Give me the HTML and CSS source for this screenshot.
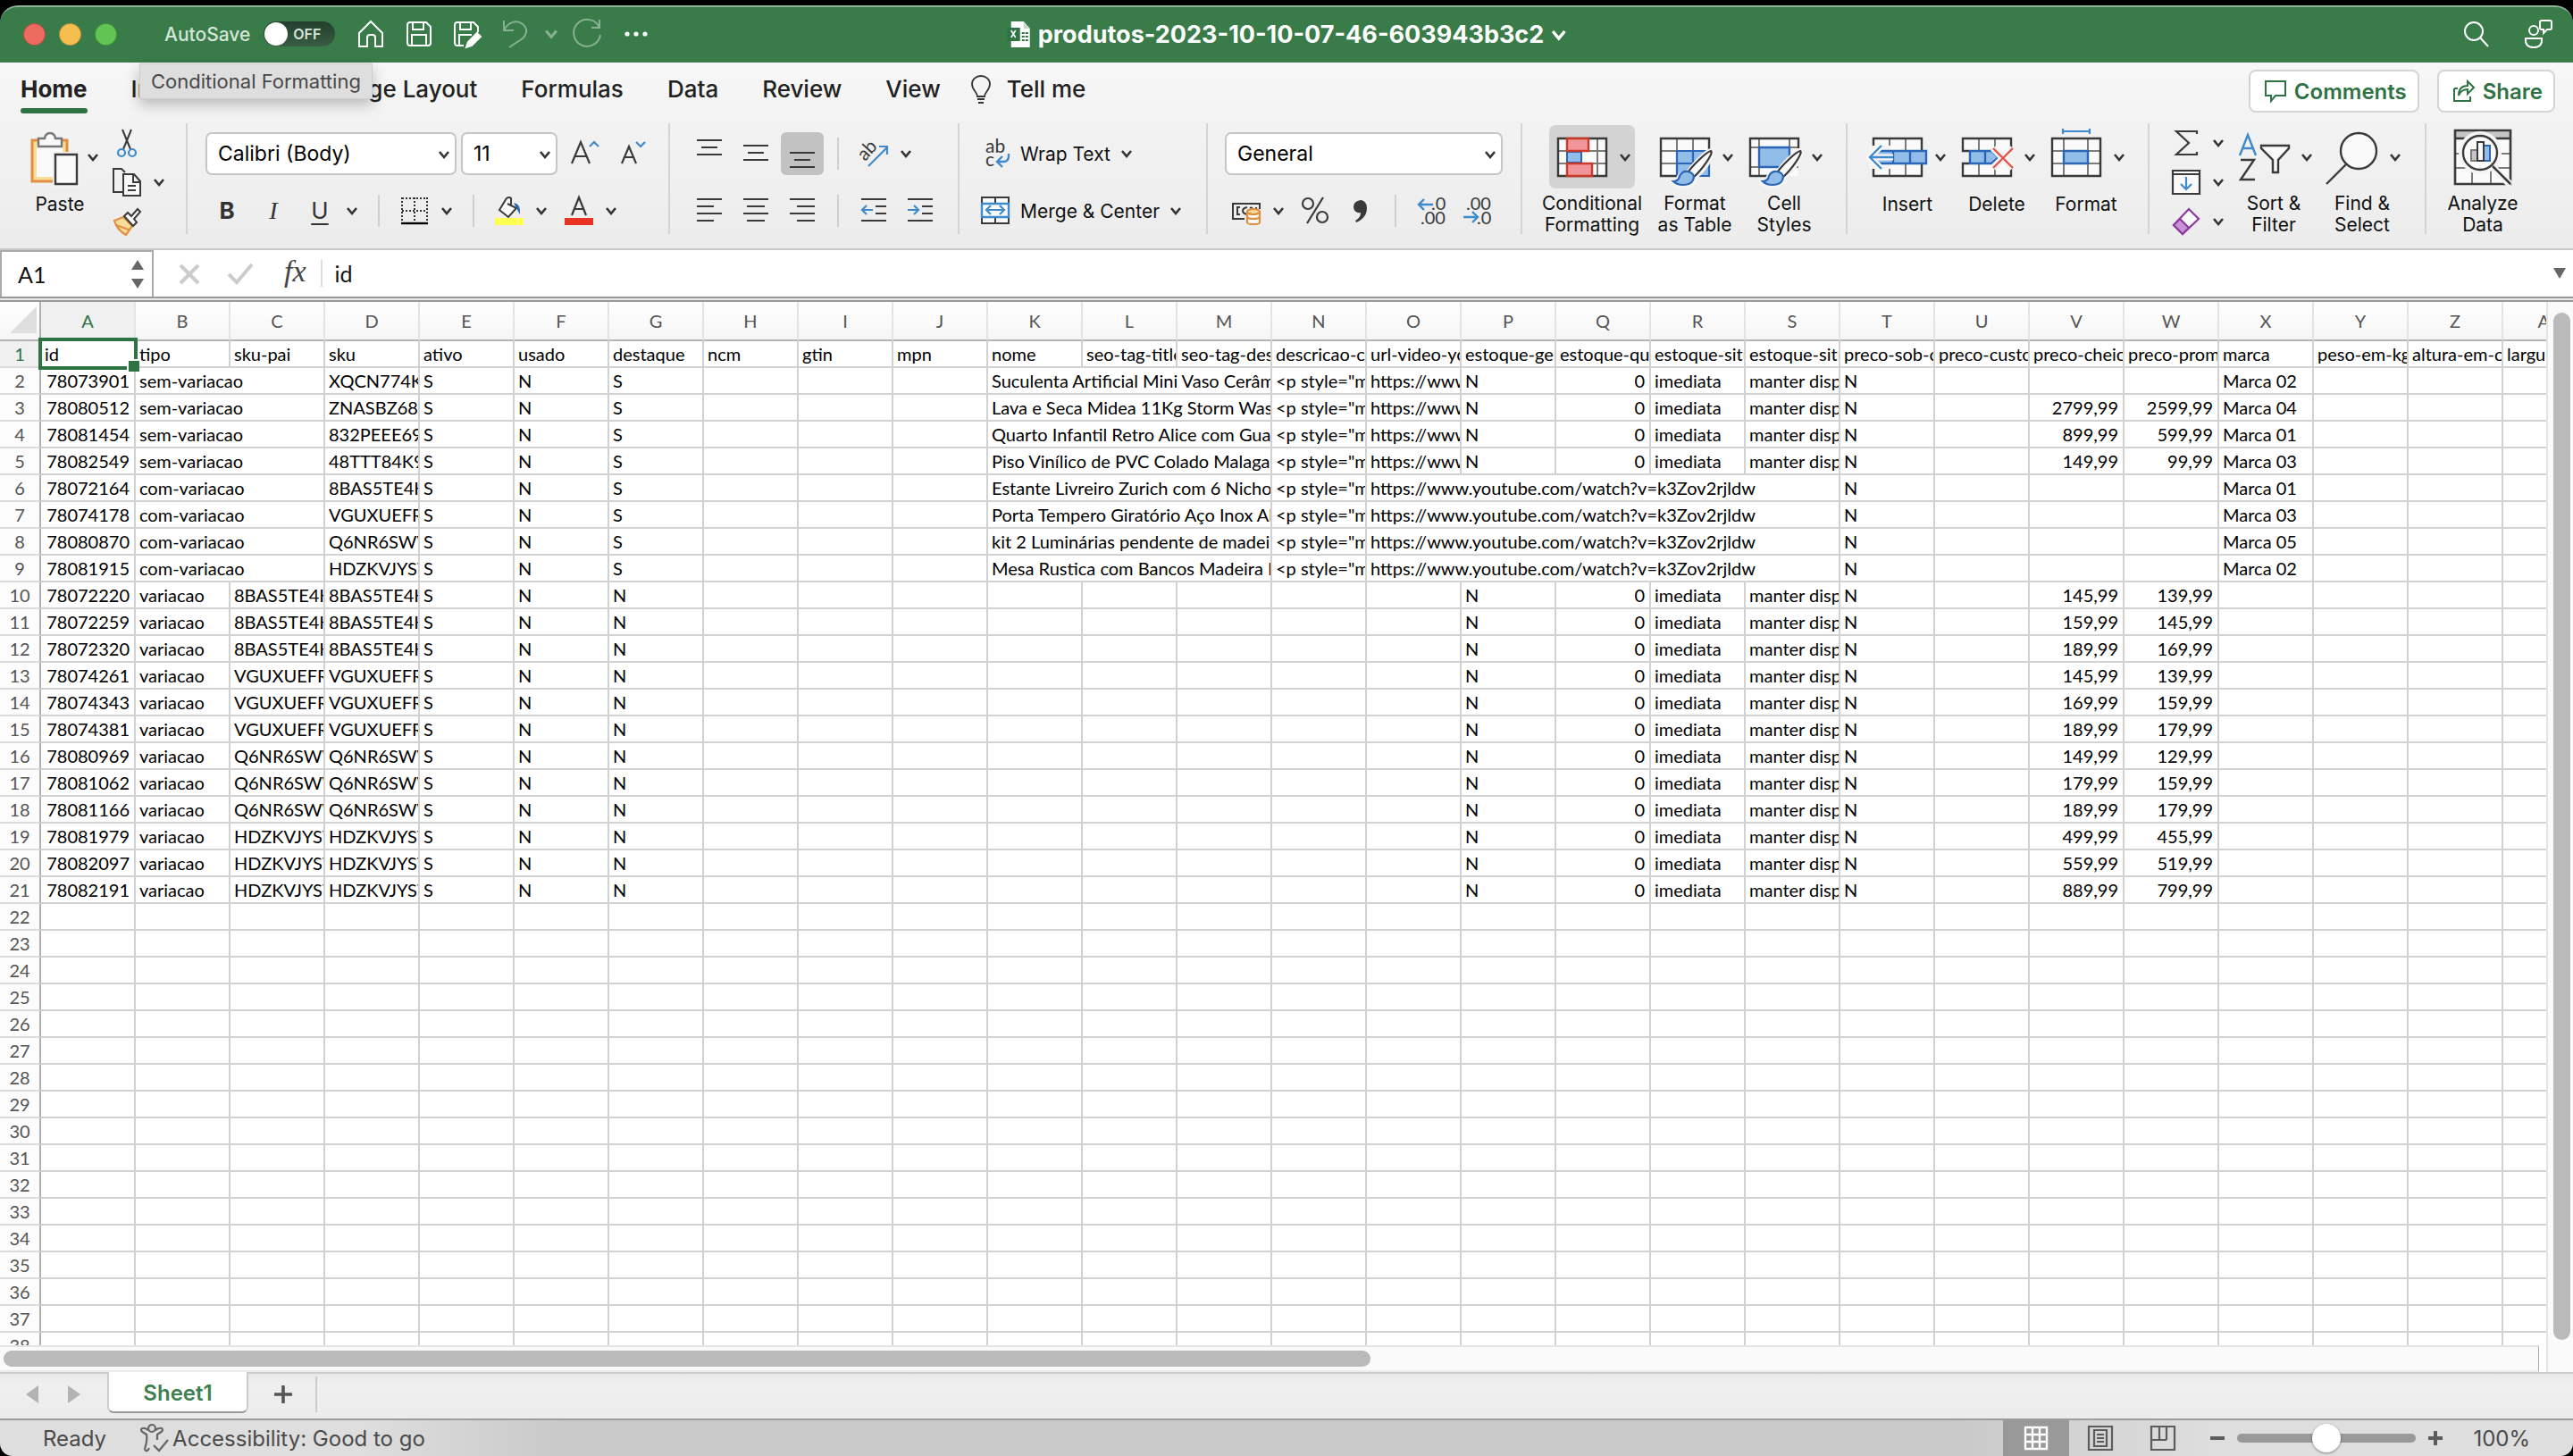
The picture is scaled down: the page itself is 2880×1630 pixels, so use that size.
FILE: index.html
```html
<!DOCTYPE html>
<html lang="en">
<head>
    <meta charset="UTF-8">
    <meta name="viewport" content="width=device-width, initial-scale=1.0">
    <title>produtos-2023-10-10-07-46-603943b3c2</title>
    <link rel="stylesheet" href="styles.css">
</head>
<body>

<svg class="defs" aria-hidden="true">
    <symbol id="chev" viewBox="0 0 12 10"><path d="M1 2l5 6 5-6" fill="none" stroke="currentColor" stroke-width="2.6"/></symbol>
</svg>

<div class="window">

<header class="titlebar">
    <div class="lights"><span class="red"></span><span class="yellow"></span><span class="green"></span></div>
    <label class="autosave">AutoSave <input type="checkbox" class="switch"><span class="off">OFF</span></label>
    <div class="quick">
        <button aria-label="Home"><svg width="32" height="32" viewBox="0 0 32 32"><path d="M3 30V15L16 2l13 13v15h-8V20q0-3-3-3h-3q-3 0-3 3v10z"/></svg></button>
        <button aria-label="Save"><svg width="32" height="32" viewBox="0 0 32 32"><path d="M3 6q0-3 3-3h18l5 5v18q0 3-3 3H6q-3 0-3-3zM9 3v8h12V3M8 29V17h16v12"/></svg></button>
        <button aria-label="Save as"><svg width="32" height="32" viewBox="0 0 32 32"><path d="M12 29H5q-3 0-3-3V6q0-3 3-3h18l5 5v6M8 3v8h12V3M7 29V17h14"/><path d="M27 15l4 4-10 10-6 2 2-6z" fill="#fff"/></svg></button>
        <button aria-label="Undo" class="dim"><svg width="32" height="32" viewBox="0 0 32 32"><path d="M3 1v11h11M3 12C8 2 18 0 24 5s5 11 0 16L9 31"/></svg></button>
        <button aria-label="Undo options" class="dim small"><svg width="14" height="12"><use href="#chev"/></svg></button>
        <button aria-label="Redo" class="dim"><svg width="32" height="32" viewBox="0 0 32 32"><path d="M30 0v9h-9M30 9a15 15 0 1 0 1 8"/></svg></button>
        <button aria-label="More"><svg width="32" height="32" viewBox="0 0 32 32"><g fill="#fff" stroke="none"><circle cx="7" cy="16" r="2.6"/><circle cx="17" cy="16" r="2.6"/><circle cx="27" cy="16" r="2.6"/></g></svg></button>
    </div>
    <div class="doc">
        <svg width="26" height="32" viewBox="0 0 26 32"><path d="M4 1h14l7 8v21H4z" fill="#fff"/><path d="M18 1v8h7z" fill="#ccd6cf"/><path d="M0 8h14v15H0z" fill="#2f7244"/><path d="M4 11l5 8M9 11l-5 8" stroke="#fff" stroke-width="1.6"/><path d="M16 13h3v2h-3zM20 13h3v2h-3zM16 17h3v2h-3zM20 17h3v2h-3zM16 21h3v2h-3zM20 21h3v2h-3z" fill="#2f7244"/></svg>
        <h1>produtos-2023-10-10-07-46-603943b3c2</h1>
        <svg width="16" height="14"><use href="#chev"/></svg>
    </div>
    <div class="tools">
        <button aria-label="Search"><svg width="32" height="32" viewBox="0 0 32 32"><circle cx="13" cy="13" r="10"/><path d="M20 20l9 10"/></svg></button>
        <button aria-label="Presence"><svg width="34" height="34" viewBox="0 0 34 34"><circle cx="12" cy="13" r="5"/><path d="M3 22h18q1 10-9 10T3 22zM21 2h9q2 0 2 2v6q0 2-2 2h-3l-4 4v-4h-2q-2 0-2-2V4q0-2 2-2z"/></svg></button>
    </div>
</header>

<nav class="tabs">
    <a href="#" class="active">Home</a>
    <a href="#">Insert</a>
    <a href="#">Draw</a>
    <a href="#">Page Layout</a>
    <a href="#">Formulas</a>
    <a href="#">Data</a>
    <a href="#">Review</a>
    <a href="#">View</a>
    <a href="#" class="tell"><svg width="24" height="32" viewBox="0 0 24 32"><path d="M8 24c0-5-6-7-6-14a10 9 0 0 1 20 0c0 7-6 9-6 14zM8 27h8M9 31h6" fill="none" stroke="#333" stroke-width="1.8"/></svg>Tell me</a>
    <div class="share">
        <button><svg width="26" height="28" viewBox="0 0 26 28"><path d="M2 3h22v16H13l-5 6v-6H2z" fill="none" stroke="#2f7244" stroke-width="2"/></svg>Comments</button>
        <button><svg width="26" height="28" viewBox="0 0 26 28"><path d="M2 11v14h18v-5M2 11h4M7 19c0-8 4-11 10-11V3l7 7-7 7v-5c-5 0-8 2-10 7z" fill="none" stroke="#2f7244" stroke-width="2"/></svg>Share</button>
    </div>
    <div class="tooltip" role="tooltip">Conditional Formatting</div>
</nav>

<div class="ribbon">
    <section class="group g-clip">
        <button class="big"><span class="pic"><svg width="64" height="64" viewBox="0 0 64 64"><path d="M12 13h39v46H12z" fill="#f8dc9a" stroke="#e08f41" stroke-width="3"/><path d="M17 18h29v36H17z" fill="#fafafa"/><path d="M19 20v-9h7q1-6 6-6t6 6h7v9z" fill="#fafafa" stroke="#777" stroke-width="2.4"/><path d="M35 26h31v40H35z" fill="#f2f2f2"/><path d="M38 29h24v33H38z" fill="#fafafa" stroke="#3a3a3a" stroke-width="2.4"/></svg><svg class="chev" width="12" height="10"><use href="#chev"/></svg></span><span>Paste</span></button>
        <div class="stack">
            <button class="split" aria-label="Cut"><svg width="32" height="32" viewBox="0 0 32 32"><path d="M11 1l9 22M21 1l-9 22" fill="none" stroke="#3a3a3a" stroke-width="2"/><g fill="none" stroke="#3f8acb" stroke-width="2.2"><circle cx="10" cy="27" r="4"/><circle cx="22" cy="27" r="4"/></g></svg></button>
            <button class="split" aria-label="Copy"><svg width="32" height="32" viewBox="0 0 32 32"><path d="M12 27H1V1h9l4 4" fill="none" stroke="#3a3a3a" stroke-width="2"/><path d="M12 7h12l7 8v16H12zM23 7v9h8M17 20h9M17 25h9" fill="#fafafa" stroke="#3a3a3a" stroke-width="2"/></svg><svg class="chev" width="12" height="10"><use href="#chev"/></svg></button>
            <button class="split" aria-label="Format painter"><svg width="32" height="32" viewBox="0 0 32 32"><path d="M2 15l10-4 10 10-7 10C8 27 4 22 2 15z" fill="#f8dc9a" stroke="#e08f41" stroke-width="2.2"/><path d="M4 20l14 5" stroke="#e08f41" stroke-width="2"/><path d="M13 10l4-4 4 4 7-8 3 3-7 8 3 4-4 4z" fill="#fafafa" stroke="#3a3a3a" stroke-width="2"/></svg></button>
        </div>
    </section>

    <section class="group g-font">
        <div class="row combos">
            <span class="combo wide"><select aria-label="Font"><option>Calibri (Body)</option></select><svg class="chev" width="12" height="10"><use href="#chev"/></svg></span>
            <span class="combo size"><select aria-label="Font size"><option>11</option></select><svg class="chev" width="12" height="10"><use href="#chev"/></svg></span>
            <button aria-label="Increase font size"><svg width="34" height="32" viewBox="0 0 34 32"><path d="M3 27L13 3l10 24M7 19h12" fill="none" stroke="#3a3a3a" stroke-width="2.2"/><path d="M23 8l5-5 5 5" fill="none" stroke="#3f8acb" stroke-width="2.2"/></svg></button>
            <button aria-label="Decrease font size"><svg width="34" height="32" viewBox="0 0 34 32"><path d="M8 27l8-19 8 19M11 20h10" fill="none" stroke="#3a3a3a" stroke-width="2.2"/><path d="M24 3l5 5 5-5" fill="none" stroke="#3f8acb" stroke-width="2.2"/></svg></button>
        </div>
        <div class="row">
            <button class="b">B</button>
            <button class="i">I</button>
            <button class="split"><span class="u">U</span><svg class="chev" width="12" height="10"><use href="#chev"/></svg></button>
            <i class="sep"></i>
            <button class="split" aria-label="Borders"><svg width="32" height="32" viewBox="0 0 32 32"><path d="M2 2h28M2 16h28M2 1v27M16 1v27M30 1v27" fill="none" stroke="#333" stroke-width="2" stroke-dasharray="2 2"/><path d="M1 30h30" stroke="#000" stroke-width="2.4"/></svg><svg class="chev" width="12" height="10"><use href="#chev"/></svg></button>
            <i class="sep"></i>
            <button class="split" aria-label="Fill color"><svg width="32" height="32" viewBox="0 0 32 32"><path d="M0 24h32v8H0z" fill="#ffff54"/><path d="M14 8l10 5-9 10L5 15l8-13q3-2 5 0v9" fill="#fafafa" stroke="#3a3a3a" stroke-width="2"/><path d="M21 7q8 1 7 13l-4-7z" fill="#2b65b5"/></svg><svg class="chev" width="12" height="10"><use href="#chev"/></svg></button>
            <button class="split" aria-label="Font color"><svg width="32" height="32" viewBox="0 0 32 32"><path d="M0 24h32v8H0z" fill="#ea3323"/><path d="M8 21l8-20 8 20M11 14h10" fill="none" stroke="#3a3a3a" stroke-width="2.2"/></svg><svg class="chev" width="12" height="10"><use href="#chev"/></svg></button>
        </div>
    </section>

    <section class="group g-align">
        <div class="row">
            <button aria-label="Top align"><svg class="ln" width="32" height="32" viewBox="0 0 32 32"><path d="M2 1h28M7 9h18M2 17h28"/></svg></button>
            <button aria-label="Middle align"><svg class="ln" width="32" height="32" viewBox="0 0 32 32"><path d="M2 7h28M7 15h18M2 23h28"/></svg></button>
            <button aria-label="Bottom align" class="on"><svg class="ln" width="32" height="32" viewBox="0 0 32 32"><path d="M2 15h28M7 23h18M2 31h28"/></svg></button>
            <i class="sep"></i>
            <button class="split" aria-label="Orientation"><svg width="32" height="32" viewBox="0 0 32 32"><text class="ico-text" x="3" y="22" font-size="21" fill="#3a3a3a" transform="rotate(-48 8 20)">ab</text><path d="M10 30L31 9M22 8h9v9" fill="none" stroke="#3f8acb" stroke-width="2.2"/></svg><svg class="chev" width="12" height="10"><use href="#chev"/></svg></button>
        </div>
        <div class="row">
            <button aria-label="Align left"><svg class="ln" width="32" height="32" viewBox="0 0 32 32"><path d="M2 3h28M2 11h19M2 19h28M2 27h19"/></svg></button>
            <button aria-label="Center"><svg class="ln" width="32" height="32" viewBox="0 0 32 32"><path d="M2 3h28M6 11h20M2 19h28M6 27h20"/></svg></button>
            <button aria-label="Align right"><svg class="ln" width="32" height="32" viewBox="0 0 32 32"><path d="M2 3h28M10 11h20M2 19h28M10 27h20"/></svg></button>
            <i class="sep"></i>
            <button aria-label="Decrease indent"><svg class="ln" width="32" height="32" viewBox="0 0 32 32"><path d="M2 3h28M18 11h12M18 19h12M2 27h28"/><path class="blue" d="M3 15h12M8 10l-5 5 5 5"/></svg></button>
            <button aria-label="Increase indent"><svg class="ln" width="32" height="32" viewBox="0 0 32 32"><path d="M2 3h28M18 11h12M18 19h12M2 27h28"/><path class="blue" d="M2 15h12M9 10l5 5-5 5"/></svg></button>
        </div>
    </section>

    <section class="group g-wrap">
        <div class="row">
            <button class="labelled"><svg width="32" height="32" viewBox="0 0 32 32"><text class="ico-text" x="5" y="15" font-size="21" fill="#3a3a3a">ab</text><text class="ico-text" x="5" y="30" font-size="21" fill="#3a3a3a">c</text><path d="M31 16v3q0 6-6 6h-7M24 19l-6 6 6 6" fill="none" stroke="#3f8acb" stroke-width="2.4"/></svg>Wrap Text<svg class="chev" width="12" height="10"><use href="#chev"/></svg></button>
        </div>
        <div class="row">
            <button class="labelled"><svg width="32" height="32" viewBox="0 0 32 32"><path d="M1 1h30v29H1zM16 1v29" fill="#fafafa" stroke="#3a3a3a" stroke-width="2"/><path d="M1 8h30v15H1z" fill="#fafafa" stroke="#3f8acb" stroke-width="2.4"/><path d="M6 15h20M11 10l-5 5 5 5M21 10l5 5-5 5" fill="none" stroke="#3f8acb" stroke-width="2.2"/></svg>Merge &amp; Center<svg class="chev" width="12" height="10"><use href="#chev"/></svg></button>
        </div>
    </section>

    <section class="group g-num">
        <div class="row">
            <span class="combo fmt"><select aria-label="Number format"><option>General</option></select><svg class="chev" width="12" height="10"><use href="#chev"/></svg></span>
        </div>
        <div class="row">
            <button class="split" aria-label="Currency"><svg width="32" height="32" viewBox="0 0 32 32"><path d="M14 25H1V8h30v6" fill="none" stroke="#3a3a3a" stroke-width="2"/><path d="M9 12H6v8h3M17 20q-5-1-5-4t5-4M20 13q2-1 3 1M27 12v2" fill="none" stroke="#3a3a3a" stroke-width="2"/><path d="M17 17v12q0 2 7 2t7-2V17" fill="#fafafa" stroke="#e08f41" stroke-width="2.2"/><ellipse cx="24" cy="17" rx="7" ry="3" fill="#f8dc9a" stroke="#e08f41" stroke-width="2.2"/><path d="M17 23q1 2 7 2t7-2" fill="none" stroke="#e08f41" stroke-width="2.2"/></svg><svg class="chev" width="12" height="10"><use href="#chev"/></svg></button>
            <button aria-label="Percent"><svg width="32" height="32" viewBox="0 0 32 32"><g fill="none" stroke="#3a3a3a" stroke-width="2.2"><circle cx="8" cy="8" r="6"/><circle cx="24" cy="23" r="6"/><path d="M25 1L7 30"/></g></svg></button>
            <button aria-label="Comma"><svg width="32" height="32" viewBox="0 0 32 32"><path d="M10 27q6-3 6-9-7 1-8-6 0-7 8-8 7 1 7 9 0 11-12 16z" fill="#3a3a3a"/></svg></button>
            <i class="sep"></i>
            <button aria-label="Increase decimal"><svg width="32" height="32" viewBox="0 0 32 32"><text class="ico-text" x="17" y="15" font-size="20" fill="#3a3a3a">.0</text><text class="ico-text" x="5" y="31" font-size="20" fill="#3a3a3a">.00</text><path d="M19 9H3M9 3L3 9l6 6" fill="none" stroke="#3f8acb" stroke-width="2.4"/></svg></button>
            <button aria-label="Decrease decimal"><svg width="32" height="32" viewBox="0 0 32 32"><text class="ico-text" x="5" y="15" font-size="20" fill="#3a3a3a">.00</text><text class="ico-text" x="17" y="31" font-size="20" fill="#3a3a3a">.0</text><path d="M2 23h16M12 17l6 6-6 6" fill="none" stroke="#3f8acb" stroke-width="2.4"/></svg></button>
        </div>
    </section>

    <section class="group g-styles">
        <button class="big wide-label pressed"><span class="pic"><svg width="64" height="64" viewBox="0 0 64 64"><path d="M5 11h54v42H5z" fill="#fafafa"/><path d="M5 25h54M5 39h54M15 11v42M49 11v42" stroke="#7c7b76" stroke-width="2"/><path d="M5 11h54v42H5z" fill="none" stroke="#3a3a3a" stroke-width="2.4"/><path d="M15 26h16v12H15z" fill="#92bde8" stroke="#2b65b5" stroke-width="2"/><path d="M32 26h16v12H32z" fill="#fafafa"/><path d="M15 11h24v14H15zM15 39h28v14H15z" fill="#f09599" stroke="#c93a2c" stroke-width="2.4"/></svg><svg class="chev" width="12" height="10"><use href="#chev"/></svg></span><span>Conditional<br>Formatting</span></button>
        <button class="big"><span class="pic"><svg width="64" height="64" viewBox="0 0 64 64"><path d="M5 11h54v42H5z" fill="#fafafa"/><path d="M23 25h36v28H23z" fill="#92bde8"/><path d="M5 25h18M5 39h18M23 11v14M41 11v14" stroke="#7c7b76" stroke-width="2"/><path d="M59 24V11H5v42h18" fill="none" stroke="#3a3a3a" stroke-width="2.4"/><path d="M23 53V25h36v28H23M23 39h36M41 25v14" fill="none" stroke="#2b65b5" stroke-width="2.2"/><path d="M61 25c-4 0-22 18-26 26q-7-2-10 5-3 6-8 2 6 9 16 6 10-1 10-10c10-8 23-27 18-29z" fill="#f4f4f4" stroke="#f4f4f4" stroke-width="6"/><path d="M61 25c-5 1-20 16-25 23l6 6c8-7 23-27 19-29z" fill="#fafafa" stroke="#3a3a3a" stroke-width="2.2"/><path d="M19 59q6 0 7-6 3-6 9-5 6 1 7 6-1 9-12 9-7 0-11-4z" fill="#92bde8" stroke="#2b65b5" stroke-width="2.2"/></svg><svg class="chev" width="12" height="10"><use href="#chev"/></svg></span><span>Format<br>as Table</span></button>
        <button class="big"><span class="pic"><svg width="64" height="64" viewBox="0 0 64 64"><path d="M5 11h54v42H5z" fill="#fafafa"/><path d="M5 21h54M5 43h54M15 11v42M49 11v12" stroke="#7c7b76" stroke-width="2"/><path d="M59 22V11H5v42h20" fill="none" stroke="#3a3a3a" stroke-width="2.4"/><path d="M15 21h34v22H15z" fill="#92bde8" stroke="#2b65b5" stroke-width="2.4"/><path d="M61 25c-4 0-22 18-26 26q-7-2-10 5-3 6-8 2 6 9 16 6 10-1 10-10c10-8 23-27 18-29z" fill="#f4f4f4" stroke="#f4f4f4" stroke-width="6"/><path d="M61 25c-5 1-20 16-25 23l6 6c8-7 23-27 19-29z" fill="#fafafa" stroke="#3a3a3a" stroke-width="2.2"/><path d="M19 59q6 0 7-6 3-6 9-5 6 1 7 6-1 9-12 9-7 0-11-4z" fill="#92bde8" stroke="#2b65b5" stroke-width="2.2"/></svg><svg class="chev" width="12" height="10"><use href="#chev"/></svg></span><span>Cell<br>Styles</span></button>
    </section>

    <section class="group g-cells">
        <button class="big"><span class="pic"><svg width="64" height="64" viewBox="0 0 64 64"><path d="M5 11h54v42H5z" fill="#fafafa"/><path d="M23 11v42M41 11v42" stroke="#7c7b76" stroke-width="2"/><path d="M5 11h54v42H5z" fill="none" stroke="#3a3a3a" stroke-width="2.4"/><path d="M0 19h24v26H0z" fill="#f4f4f4"/><path d="M8 25h56v14H8zM27 25v14M46 25v14" fill="#92bde8" stroke="#2b65b5" stroke-width="2.4"/><path d="M1 32h26M14 19L1 32l13 13" fill="none" stroke="#fafafa" stroke-width="7"/><path d="M1 32h26M14 19L1 32l13 13" fill="none" stroke="#3f8acb" stroke-width="2.4"/></svg><svg class="chev" width="12" height="10"><use href="#chev"/></svg></span><span>Insert</span></button>
        <button class="big"><span class="pic"><svg width="64" height="64" viewBox="0 0 64 64"><path d="M5 11h54v14H5zM5 39h54v14H5z" fill="#fafafa"/><path d="M23 11v42M41 11v42" stroke="#7c7b76" stroke-width="2"/><path d="M12 25H5V11h54v10M12 39H5v14h54V43" fill="none" stroke="#3a3a3a" stroke-width="2.4"/><path d="M13 25h24l8 7-8 7H13zM30 25v14" fill="#92bde8" stroke="#2b65b5" stroke-width="2.4"/><path d="M39 22l22 22M61 22L39 44" stroke="#f4f4f4" stroke-width="8"/><path d="M39 22l22 22M61 22L39 44" stroke="#e2544b" stroke-width="2.4"/></svg><svg class="chev" width="12" height="10"><use href="#chev"/></svg></span><span>Delete</span></button>
        <button class="big"><span class="pic"><svg width="64" height="64" viewBox="0 0 64 64"><path d="M5 11h54v42H5z" fill="#fafafa"/><path d="M5 25h54M5 39h54M18 11v42M45 11v42" stroke="#7c7b76" stroke-width="2"/><path d="M5 11h54v42H5z" fill="none" stroke="#3a3a3a" stroke-width="2.4"/><path d="M18 25h27v14H18z" fill="#92bde8" stroke="#2b65b5" stroke-width="2.4"/><path d="M17 3h30M17 0v6M47 0v6" stroke="#3f8acb" stroke-width="2.2"/></svg><svg class="chev" width="12" height="10"><use href="#chev"/></svg></span><span>Format</span></button>
    </section>

    <section class="group g-edit">
        <div class="stack">
            <button class="split" aria-label="AutoSum"><svg width="32" height="32" viewBox="0 0 32 32"><path d="M28 6V3H5l14 13L5 29h23v-3" fill="none" stroke="#3a3a3a" stroke-width="2.2"/></svg><svg class="chev" width="12" height="10"><use href="#chev"/></svg></button>
            <button class="split" aria-label="Fill"><svg width="32" height="32" viewBox="0 0 32 32"><path d="M1 3h30v26H1z" fill="#fafafa" stroke="#3a3a3a" stroke-width="2.2"/><path d="M1 7h30" stroke="#3a3a3a" stroke-width="2"/><path d="M16 10v14M10 18l6 6 6-6" fill="none" stroke="#3f8acb" stroke-width="2.2"/></svg><svg class="chev" width="12" height="10"><use href="#chev"/></svg></button>
            <button class="split" aria-label="Clear"><svg width="32" height="32" viewBox="0 0 32 32"><path d="M2 20L19 2l11 11-18 17z" fill="#fafafa" stroke="#8c3a9e" stroke-width="2.2"/><path d="M2 20l7-7 10 10-7 7z" fill="#ca93d6" stroke="#8c3a9e" stroke-width="2.2"/></svg><svg class="chev" width="12" height="10"><use href="#chev"/></svg></button>
        </div>
        <button class="big"><span class="pic"><svg width="64" height="64" viewBox="0 0 64 64"><path d="M5 30l9-23 9 23M8 22h12" fill="none" stroke="#3f8acb" stroke-width="2.4"/><path d="M6 35h15L6 57h16" fill="none" stroke="#3a3a3a" stroke-width="2.4"/><path d="M29 19h31v3L48 35v14h-6V35L29 22z" fill="#fafafa" stroke="#3a3a3a" stroke-width="2.4"/></svg><svg class="chev" width="12" height="10"><use href="#chev"/></svg></span><span>Sort &amp;<br>Filter</span></button>
        <button class="big"><span class="pic"><svg width="64" height="64" viewBox="0 0 64 64"><circle cx="39" cy="25" r="20" fill="#fafafa" stroke="#3a3a3a" stroke-width="2.4"/><path d="M25 40L3 62" stroke="#3a3a3a" stroke-width="2.4"/></svg><svg class="chev" width="12" height="10"><use href="#chev"/></svg></span><span>Find &amp;<br>Select</span></button>
    </section>

    <section class="group g-data">
        <button class="big"><span class="pic"><svg width="64" height="64" viewBox="0 0 64 64"><path d="M1 2h62v60H1z" fill="#fafafa"/><path d="M1 2h62v9H1z" fill="#c6c6c6"/><path d="M1 28h62M1 44h62M20 44v18M41 44v18" stroke="#7c7b76" stroke-width="2"/><path d="M1 11h62M1 2h62v60H1z" fill="none" stroke="#3a3a3a" stroke-width="2.6"/><circle cx="29" cy="27" r="21" fill="#fafafa" stroke="#f4f4f4" stroke-width="6"/><path d="M43 43l20 20" stroke="#f4f4f4" stroke-width="8"/><circle cx="29" cy="27" r="19" fill="#fafafa" stroke="#3a3a3a" stroke-width="2.4"/><path d="M43 42l20 20" stroke="#3a3a3a" stroke-width="2.6"/><path d="M19 24h7v12h-7z" fill="#c6c6c6" stroke="#7c7b76" stroke-width="2"/><path d="M33 19h7v17h-7z" fill="#92bde8" stroke="#2b65b5" stroke-width="2"/><path d="M26 15h7v21h-7z" fill="#fafafa" stroke="#3a3a3a" stroke-width="2"/></svg></span><span>Analyze<br>Data</span></button>
    </section>
</div>

<div class="formula-bar">
    <div class="namebox">
        <input type="text" aria-label="Name box" value="A1">
        <svg width="16" height="34" viewBox="0 0 16 34"><path d="M8 1l7 11H1zM8 33l7-11H1z" fill="#666"/></svg>
    </div>
    <button aria-label="Cancel"><svg width="30" height="30" viewBox="0 0 30 30"><path d="M5 6l20 20M25 6L5 26" stroke="#ccc" stroke-width="4"/></svg></button>
    <button aria-label="Enter"><svg width="30" height="30" viewBox="0 0 30 30"><path d="M2 16l9 9L28 5" fill="none" stroke="#ccc" stroke-width="4"/></svg></button>
    <button class="fx">fx</button>
    <input type="text" class="formula" aria-label="Formula" value="id">
    <svg class="more" width="14" height="12" viewBox="0 0 14 12"><path d="M0 0h14L7 12z" fill="#666"/></svg>
</div>

<main class="sheet">
    <div class="cells">
        <table id="grid"></table>
    </div>
    <div class="vscroll"><div></div></div>
    <div class="hscroll"><div></div></div>
</main>

<div class="sheet-tabs">
    <button aria-label="Previous sheet"><svg width="14" height="22" viewBox="0 0 14 22"><path d="M14 1v20L0 11z" fill="#b3b3b3"/></svg></button>
    <button aria-label="Next sheet"><svg width="14" height="22" viewBox="0 0 14 22"><path d="M0 1v20l14-10z" fill="#b3b3b3"/></svg></button>
    <button class="tab">Sheet1</button>
    <button aria-label="Add sheet" class="add"><svg width="20" height="20" viewBox="0 0 20 20"><path d="M10 0v20M0 10h20" stroke="#555" stroke-width="3.6"/></svg></button>
</div>

<footer class="status">
    <span>Ready</span>
    <span class="access"><svg width="34" height="32" viewBox="0 0 34 32"><g fill="none" stroke="#666" stroke-width="2.2"><circle cx="14" cy="5" r="4"/><path d="M10 7C6 4 2 4 2 7c0 2 3 3 6 5 1 5 0 10-2 16 1 4 4 2 5-1M18 7c4-3 8-3 8 0 0 2-4 3-6 5v6"/><path d="M16 24l6 6 10-12"/></g></svg>Accessibility: Good to go</span>
    <div class="views">
        <button aria-label="Normal" class="on"><svg width="28" height="28" viewBox="0 0 28 28"><path d="M2 2h24v24H2zM10 2v24M18 2v24M2 10h24M2 18h24" fill="none" stroke="#fff" stroke-width="2.4"/></svg></button>
        <button aria-label="Page layout"><svg width="28" height="28" viewBox="0 0 28 28"><path d="M1 1h26v26H1zM7 5h14v18H7zM10 10h8M10 14h8M10 18h8" fill="none" stroke="#5c5c5c" stroke-width="2.2"/></svg></button>
        <button aria-label="Page break"><svg width="28" height="28" viewBox="0 0 28 28"><path d="M1 1h26v26H1zM10 1v15M18 1v15M1 16h17" fill="none" stroke="#5c5c5c" stroke-width="2.2"/></svg></button>
    </div>
    <div class="zoom">
        <button aria-label="Zoom out"><svg width="16" height="16" viewBox="0 0 16 16"><path d="M0 8h16" stroke="#5c5c5c" stroke-width="4"/></svg></button>
        <input type="range" aria-label="Zoom" min="0" max="100" value="50">
        <button aria-label="Zoom in"><svg width="16" height="16" viewBox="0 0 16 16"><path d="M0 8h16M8 0v16" stroke="#5c5c5c" stroke-width="4"/></svg></button>
        <span>100%</span>
    </div>
</footer>

</div>

<script>
    const grid = document.getElementById('grid');
    const letters = 'ABCDEFGHIJKLMNOPQRSTUVWXYZ'.split('').concat('AA');
    const video = 'https://www.youtube.com/watch?v=k3Zov2rjldw';

    const header = ['id', 'tipo', 'sku-pai', 'sku', 'ativo', 'usado', 'destaque', 'ncm', 'gtin', 'mpn', 'nome',
        'seo-tag-title', 'seo-tag-description', 'descricao-completa', 'url-video-youtube', 'estoque-gerenciado',
        'estoque-quantidade', 'estoque-situacao', 'estoque-situacao', 'preco-sob-consulta', 'preco-custo',
        'preco-cheio', 'preco-promocional', 'marca', 'peso-em-kg', 'altura-em-cm', 'largura-em-cm'];

    // id, tipo, sku, nome, cheio, promocional, marca
    const products = [
        ['78073901', 'sem-variacao', 'XQCN774K', 'Suculenta Artificial Mini Vaso Cerâmica', '', '', 'Marca 02'],
        ['78080512', 'sem-variacao', 'ZNASBZ68J', 'Lava e Seca Midea 11Kg Storm Wash', '2799,99', '2599,99', 'Marca 04'],
        ['78081454', 'sem-variacao', '832PEEE69', 'Quarto Infantil Retro Alice com Guarda', '899,99', '599,99', 'Marca 01'],
        ['78082549', 'sem-variacao', '48TTT84K9', 'Piso Vinílico de PVC Colado Malaga', '149,99', '99,99', 'Marca 03'],
        ['78072164', 'com-variacao', '8BAS5TE4H', 'Estante Livreiro Zurich com 6 Nichos', '', '', 'Marca 01'],
        ['78074178', 'com-variacao', 'VGUXUEFR', 'Porta Tempero Giratório Aço Inox Alto', '', '', 'Marca 03'],
        ['78080870', 'com-variacao', 'Q6NR6SWV', 'kit 2 Luminárias pendente de madeira', '', '', 'Marca 05'],
        ['78081915', 'com-variacao', 'HDZKVJYST', 'Mesa Rustica com Bancos Madeira Maciça', '', '', 'Marca 02']
    ];

    // id, sku, cheio, promocional
    const variations = [
        ['78072220', '8BAS5TE4H', '145,99', '139,99'],
        ['78072259', '8BAS5TE4H', '159,99', '145,99'],
        ['78072320', '8BAS5TE4H', '189,99', '169,99'],
        ['78074261', 'VGUXUEFR', '145,99', '139,99'],
        ['78074343', 'VGUXUEFR', '169,99', '159,99'],
        ['78074381', 'VGUXUEFR', '189,99', '179,99'],
        ['78080969', 'Q6NR6SWV', '149,99', '129,99'],
        ['78081062', 'Q6NR6SWV', '179,99', '159,99'],
        ['78081166', 'Q6NR6SWV', '189,99', '179,99'],
        ['78081979', 'HDZKVJYST', '499,99', '455,99'],
        ['78082097', 'HDZKVJYST', '559,99', '519,99'],
        ['78082191', 'HDZKVJYST', '889,99', '799,99']
    ];

    const rows = [header];
    products.forEach(function (p) {
        const stock = p[1] === 'sem-variacao' ? ['N', '0', 'imediata', 'manter disponivel'] : ['', '', '', ''];
        rows.push([p[0], p[1], '', p[2], 'S', 'N', 'S', '', '', '', p[3], '', '', '<p style="margin', video]
            .concat(stock, ['N', '', p[4], p[5], p[6], '', '', '']));
    });
    variations.forEach(function (v) {
        rows.push([v[0], 'variacao', v[1], v[1], 'S', 'N', 'N', '', '', '', '', '', '', '', '',
            'N', '0', 'imediata', 'manter disponivel', 'N', '', v[2], v[3], '', '', '', '']);
    });
    while (rows.length < 38) rows.push(Array(27).fill(''));

    // how many empty cells a long text may run over
    function spanOf(row, c) {
        const long = { 1: 2, 10: 3, 14: 5 }[c];
        if (!long || !row[c] || row === header) return 1;
        let n = 1;
        while (n < long && !row[c + n]) n++;
        return n;
    }

    const cols = document.createElement('colgroup');
    cols.innerHTML = '<col class="num">' + '<col class="col">'.repeat(27);
    grid.appendChild(cols);

    const head = grid.createTHead().insertRow();
    head.innerHTML = '<th class="corner"><svg width="30" height="32" viewBox="0 0 30 32"><path d="M30 0v30H0z" fill="#dedede"/></svg></th>' +
        letters.map((l, i) => `<th scope="col"${i === 0 ? ' class="cur"' : ''}>${l}</th>`).join('');

    const body = grid.createTBody();
    rows.forEach(function (row, r) {
        const tr = body.insertRow();
        const th = document.createElement('th');
        th.scope = 'row';
        th.textContent = r + 1;
        if (r === 0) th.className = 'cur';
        tr.appendChild(th);
        for (let c = 0; c < row.length;) {
            const td = tr.insertCell();
            const n = spanOf(row, c);
            td.textContent = row[c];
            if (n > 1) td.colSpan = n;
            if (/^\d+(,\d+)?$/.test(row[c])) td.className = 'number';
            if (r === 0 && c === 0) td.className = 'selected';
            c += n;
        }
    });
</script>

</body>
</html>
```
FILE: styles.css
```css
* { box-sizing: border-box; }
body { margin: 0; background: #000; font-family: Inter, "Liberation Sans", sans-serif; font-size: 22px; color: #111; overflow: hidden; }
button { border: none; background: none; padding: 0; margin: 0; font: inherit; color: inherit; display: flex; align-items: center; cursor: pointer; }
svg { display: block; flex: none; overflow: visible; }
input, select { font: inherit; color: inherit; }
.defs { position: absolute; width: 0; height: 0; }
.window { height: 100vh; border-top: 6px solid #000; display: flex; flex-direction: column; overflow: hidden; }

/* title bar */
.titlebar { flex: none; height: 64px; background: #397b49; border-top: 2px solid #8db597; border-radius: 20px 20px 0 0; display: flex; align-items: center; position: relative; padding: 0 22px 2px 26px; color: #fff; }
.lights { display: flex; gap: 15px; }
.lights span { width: 25px; height: 25px; border-radius: 50%; border: 1px solid rgba(0, 0, 0, 0.25); }
.red { background: #ec6a5e; }
.yellow { background: #f4bf4f; }
.green { background: #61c554; }
.autosave { margin-left: 53px; display: flex; align-items: center; position: relative; font-weight: 500; font-size: 21px; color: #d5e5d9; }
.switch { appearance: none; margin: 0 0 0 15px; width: 80px; height: 28px; border-radius: 14px; background: linear-gradient(#223f2b, #3a5c43); cursor: pointer; }
.switch::before { content: ""; display: block; width: 26px; height: 26px; margin: 1px; border-radius: 50%; background: #fff; }
.off { position: absolute; right: 16px; font-size: 16px; font-weight: 600; }
.quick { display: flex; align-items: center; margin-left: 24px; gap: 22px; }
.quick svg, .tools svg { fill: none; stroke: #fff; stroke-width: 2; }
.quick .small svg { color: #fff; stroke: none; }
.dim { opacity: 0.4; }
.quick .small { margin: 0 -5px; }
.doc { position: absolute; left: 50%; top: 15px; transform: translateX(-50%); display: flex; align-items: center; gap: 8px; }
.doc h1 { margin: 0; font-size: 27px; line-height: 32px; font-weight: 700; white-space: nowrap; }
.tools { margin-left: auto; display: flex; gap: 36px; }

/* tabs */
.tabs { flex: none; height: 60px; background: linear-gradient(#f7f7f7, #f3f3f3); display: flex; align-items: center; gap: 49px; padding: 0 20px 0 23px; position: relative; }
.tabs a { color: #222; text-decoration: none; font-size: 26px; font-weight: 500; line-height: 58px; white-space: nowrap; }
.tabs a.active { font-weight: 700; position: relative; }
.tabs a.active::after { content: ""; position: absolute; left: 0; right: 0; bottom: 2px; height: 6px; border-radius: 3px; background: #2f7244; }
.tabs .tell { display: flex; align-items: center; gap: 17px; margin-left: -16px; }
.share { margin: 4px 0 0 auto; display: flex; gap: 20px; }
.share button { height: 48px; padding: 0 12px 0 15px; gap: 8px; border: 2px solid #d4d4d4; border-radius: 8px; background: #fff; color: #2f7244; font-size: 24px; font-weight: 600; }
.tooltip { position: absolute; left: 156px; top: 1px; height: 40px; line-height: 38px; padding: 0 12px; background: #dedede; color: #484848; font-size: 22px; white-space: nowrap; border: 1px solid #cfcfcf; box-shadow: 0 6px 16px rgba(0, 0, 0, 0.25); }

/* ribbon */
.ribbon { flex: none; height: 150px; background: linear-gradient(#f3f3f3, #ececec); border-bottom: 2px solid #c8c8c8; padding-top: 8px; display: flex; }
.group { height: 124px; border-right: 2px solid #d4d4d4; flex: none; display: flex; position: relative; }
.group:last-child { border: none; }
.g-clip { width: 210px; padding-left: 24px; gap: 16px; }
.g-font, .g-align, .g-wrap, .g-num { flex-direction: column; gap: 22px; padding-top: 10px; }
.g-font { width: 540px; padding-left: 20px; }
.g-align { width: 324px; padding-left: 28px; }
.g-wrap { width: 278px; padding-left: 24px; }
.g-num { width: 352px; padding-left: 19px; }
.g-styles { width: 364px; padding-left: 35px; gap: 14px; }
.g-cells { width: 338px; padding-left: 24px; gap: 14px; }
.g-edit { width: 310px; padding-left: 25px; gap: 13px; }
.g-data { padding-left: 31px; }
.row { display: flex; align-items: center; height: 36px; gap: 20px; }
.row:first-child { height: 48px; }
.row.combos { gap: 5px; }
.row.combos button { margin-left: 8px; }
.row.combos button + button { margin-left: 12px; }
.g-font .row:last-child { padding-left: 8px; }
.g-num .row:last-child { padding-left: 8px; gap: 19px; }
.sep { width: 2px; height: 36px; background: #cfcfcf; margin: 0 3px; }
.chev { color: #333; }
.split { gap: 14px; }
.labelled { gap: 12px; white-space: nowrap; font-size: 21px; }
.on { position: relative; }
.row .on::before { content: ""; position: absolute; inset: -8px; border-radius: 6px; background: #c2c2c2; }
.on svg { position: relative; }
.b, .i, .u { width: 32px; font-size: 26px; line-height: 28px; text-align: center; justify-content: center; color: #333; }
.b { font-weight: 700; }
.i { font-family: "Liberation Serif", serif; font-style: italic; font-size: 28px; }
.u { text-decoration: underline; text-underline-offset: 5px; }
.ln { fill: none; stroke: #3a3a3a; stroke-width: 2.2; }
.blue { stroke: #3f8acb; }
.ico-text { font-family: Lato, sans-serif; }
.combo { position: relative; height: 48px; }
.combo select { appearance: none; width: 100%; height: 48px; padding: 0 12px; border: 2px solid #c6c6c6; border-radius: 7px; background: #fff; font-size: 23px; color: #000; }
.combo .chev { position: absolute; right: 8px; top: 20px; }
.wide { width: 281px; }
.size { width: 108px; }
.fmt { width: 311px; }
.big { width: 86px; height: 126px; flex-direction: column; font-size: 21px; line-height: 24px; text-align: center; white-space: nowrap; gap: 5px; }
.pic { height: 72px; margin-top: 2px; display: flex; align-items: center; gap: 10px; }
.wide-label { margin-right: 15px; }
.pressed .pic { background: #d3d3d3; border-radius: 7px; padding: 0 5px; }
.g-data .big { width: 64px; }
.stack { display: flex; flex-direction: column; gap: 12px; padding-top: 6px; }

/* formula bar */
.formula-bar { flex: none; height: 54px; background: #fff; border-bottom: 2px solid #999; display: flex; align-items: center; margin-bottom: 2px; }
.namebox { width: 172px; height: 52px; border: solid #aaa; border-width: 2px 2px 0 2px; display: flex; align-items: center; padding: 0 8px 0 18px; margin-right: 25px; }
.namebox input { width: 126px; }
.formula-bar input { border: none; outline: none; background: none; padding: 0; font-family: Lato, sans-serif; font-size: 25px; }
.formula-bar button { margin-right: 27px; }
.formula-bar .fx { font-family: "Liberation Serif", serif; font-style: italic; font-size: 34px; color: #444; margin: 0 16px 4px 7px; }
.formula-bar .formula { flex: 1; height: 30px; border-left: 2px solid #ddd; padding-left: 14px; }
.more { margin-right: 8px; }

/* sheet */
.sheet { flex: 1; min-height: 0; display: grid; grid-template-columns: 1fr 30px; grid-template-rows: 1fr 30px; background: #fff; border-top: 2px solid #999; box-shadow: 0 -2px #e8e8e8; }
.cells { overflow: hidden; font-family: Lato, sans-serif; font-size: 20px; color: #000; min-width: 0; }
#grid { table-layout: fixed; width: 100%; border-spacing: 0; }
.num { width: 46px; }
.col { width: 106px; }
#grid th { font-weight: 400; color: #555; padding: 0; text-align: center; background: #fcfcfc; border-right: 2px solid #e4e4e4; border-bottom: 2px solid #dcdcdc; }
#grid thead th { height: 44px; background: linear-gradient(#fff, #f6f6f6); border-bottom-color: #b4b4b4; }
#grid tbody th, #grid .corner { border-right-color: #b0b0b0; }
#grid .corner svg { margin: 0 0 0 11px; }
#grid th.cur { background: #f0f0f0; color: #2f7244; }
#grid td { height: 30px; padding: 0 5px 0 4px; line-height: 28px; overflow: hidden; white-space: nowrap; border-right: 2px solid #d2d2d2; border-bottom: 2px solid #d2d2d2; }
#grid .number { text-align: right; }
#grid .selected { position: relative; overflow: visible; }
.selected::before { content: ""; position: absolute; inset: -4px -4px -4px -3px; border: 4px solid #2f7244; }
.selected::after { content: ""; position: absolute; right: -6px; bottom: -6px; width: 12px; height: 12px; background: #2f7244; border: solid #fff; border-width: 2px 0 0 2px; }
.vscroll { grid-column: 2; grid-row: 1 / 3; background: #fafafa; border-left: 2px solid #e4e4e4; padding: 12px 3px 36px 6px; }
.vscroll div { height: 100%; border-radius: 10px; background: #bababa; }
.hscroll { grid-column: 1; grid-row: 2; background: #fafafa; border-top: 2px solid #e4e4e4; border-bottom: 2px solid #ececec; margin-right: 8px; border-right: 1px solid #aaa; padding: 4px; }
.hscroll div { width: 54%; height: 18px; border-radius: 9px; background: #bababa; }

/* sheet tabs */
.sheet-tabs { flex: none; height: 52px; background: linear-gradient(#e8e8e8, #efefef 20%, #ececec); border-top: 2px solid #cdcdcd; display: flex; align-items: center; padding: 0 29px 4px; gap: 33px; }
.sheet-tabs .tab { width: 158px; height: 46px; align-self: flex-start; margin: -2px -4px 0 -3px; padding-top: 3px; justify-content: center; background: #fff; border: 2px solid #ccc; border-top: none; border-bottom-color: #999; border-radius: 0 0 7px 7px; color: #3f8050; font-size: 24px; font-weight: 600; }
.sheet-tabs .add { height: 40px; padding-right: 26px; border-right: 2px solid #ccc; }

/* status bar */
.status { flex: none; height: 42px; border-top: 2px solid #9c9c9c; background: linear-gradient(90deg, #dedede 14%, #c9c9c9 22%, #c9c9c9 76%, #dedede 86%); border-radius: 0 0 14px 14px; display: flex; align-items: center; padding: 0 48px; color: #4a4a4a; font-size: 24px; white-space: nowrap; }
.access { display: flex; align-items: center; gap: 3px; margin-left: 37px; }
.views { margin-left: auto; display: flex; height: 40px; }
.views button { width: 70px; justify-content: center; }
.views .on { width: 74px; background: #999; }
.zoom { display: flex; align-items: center; gap: 14px; margin-left: 18px; }
.zoom span { margin-left: 20px; }
.zoom input { appearance: none; width: 200px; height: 10px; margin: 0; border-radius: 5px; background: #9a9a9a; }
.zoom input::-webkit-slider-thumb { appearance: none; width: 32px; height: 32px; border-radius: 50%; background: #fff; box-shadow: 0 1px 3px rgba(0, 0, 0, 0.4); }
```
